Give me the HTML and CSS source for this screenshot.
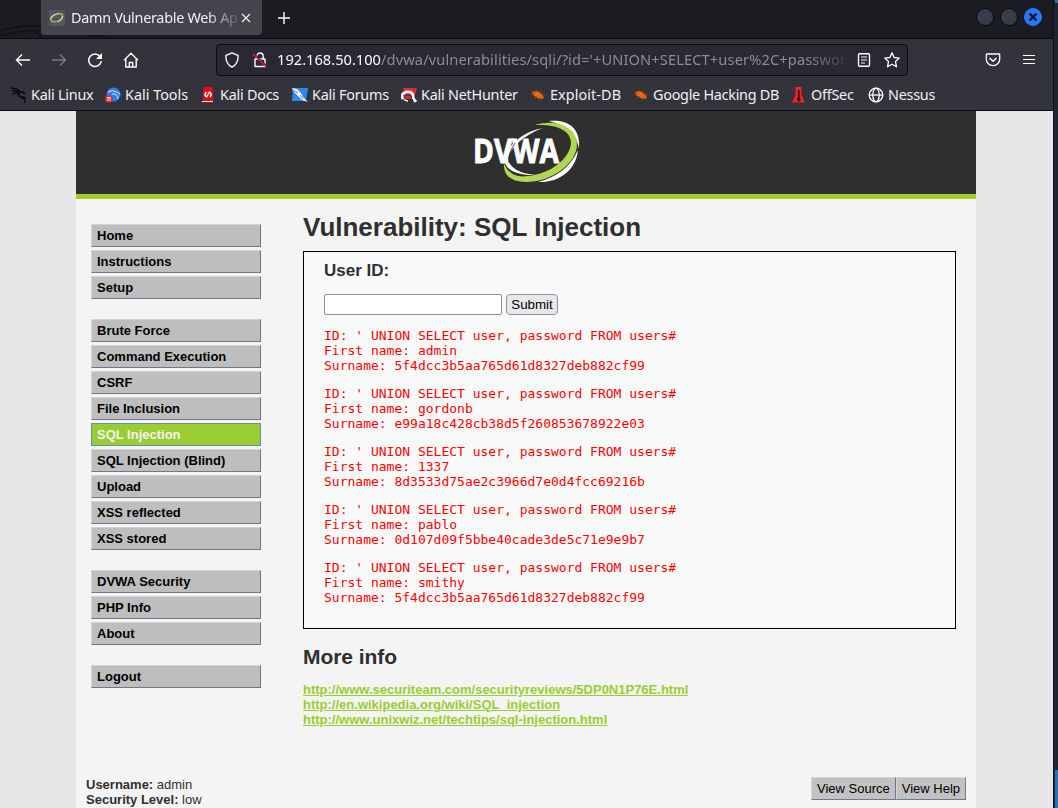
FILE: index.html
```html
<!DOCTYPE html>
<html lang="en">
<head>
<meta charset="utf-8">
<title>Damn Vulnerable Web App</title>
<link rel="stylesheet" href="styles.css">
</head>
<body>
<div class="desktop">
<div class="window">
  <header class="tabbar">
    <svg class="dragon" width="130" height="38" viewBox="0 0 130 38"><path d="M0 31Q20 24 44 26M0 36Q28 29 44 32M42 38l-8-8M88 36q15-1 30 4" fill="none" stroke="#101115" stroke-width="1.500"/></svg>
    <div class="tab">
      <svg class="favicon" width="16" height="16" viewBox="0 0 16 16"><rect width="16" height="16" rx="1" fill="#55565a"/><path d="M2 10C1 6 7 3.500 11 3.500" fill="none" stroke="#e3e5df" stroke-width="1.200"/><path d="M10 3.500c5 0 4 4 1 6.500-3 2-8 3-9 0" fill="none" stroke="#9dbd4b" stroke-width="1.400"/><path d="M14 6q0 4-5 6" fill="none" stroke="#d8dcd0" stroke-width="1"/></svg>
      <span class="tab-title">Damn Vulnerable Web Ap</span>
      <svg class="close" width="10" height="10" viewBox="0 0 10 10"><path d="M1 1l8 8M9 1L1 9" stroke="#eee" stroke-width="1.2"/></svg>
    </div>
    <svg class="plus" width="14" height="14" viewBox="0 0 14 14"><path d="M7 1v12M1 7h12" stroke="#fbfbfe" stroke-width="1.4"/></svg>
    <div class="controls">
      <i class="dot"></i><i class="dot"></i>
      <i class="dot dot-close"><svg width="10" height="10" viewBox="0 0 10 10"><path d="M1.500 1.500l7 7M8.500 1.500l-7 7" stroke="#101827" stroke-width="2.300"/></svg></i>
    </div>
  </header>

  <nav class="navbar">
    <svg class="nav-icon" width="16" height="16" viewBox="0 0 16 16"><path d="M15 8H1.5M7 2.5L1.5 8 7 13.500" fill="none" stroke="#fbfbfe" stroke-width="1.4"/></svg>
    <svg class="nav-icon" width="16" height="16" viewBox="0 0 16 16"><path d="M1 8h13.500M9 2.500L14.500 8 9 13.500" fill="none" stroke="#7b7c82" stroke-width="1.4"/></svg>
    <svg class="nav-icon" width="16" height="16" viewBox="0 0 16 16"><path d="M13.300 4.800A6.300 6.300 0 1 0 14.300 9" fill="none" stroke="#fbfbfe" stroke-width="1.5"/><path d="M15 1v6H9z" fill="#fbfbfe"/></svg>
    <svg class="nav-icon" width="16" height="16" viewBox="0 0 16 16"><path d="M1 8.300L8 1.200l7 7.100M2.800 7v8h10.400V7M6.300 15v-4.500h3.400V15" fill="none" stroke="#fbfbfe" stroke-width="1.4" stroke-linejoin="round"/></svg>
    <div class="urlbar">
      <svg width="16" height="16" viewBox="0 0 16 16"><path d="M8 .8l6 2.500c.5 5-1 9-6 11.900C3 12.300 1.500 8.300 2 3.300z" fill="none" stroke="#fbfbfe" stroke-width="1.4" stroke-linejoin="round"/></svg>
      <svg class="lock" width="16" height="16" viewBox="0 0 16 16"><path d="M4.800 7V4.200a3.200 3.200 0 0 1 6.400 0V7M3 7h10v7.500H3z" fill="none" stroke="#fbfbfe" stroke-width="1.4" stroke-linejoin="round"/><path d="M2 1.500l13 13" stroke="#282934" stroke-width="1.200"/><path d="M1 2l13.500 13" stroke="#e91340" stroke-width="1.500"/></svg>
      <span class="url"><b class="host">192.168.50.100</b>/dvwa/vulnerabilities/sqli/?id='+UNION+SELECT+user%2C+passwor</span>
      <svg class="reader" width="16" height="16" viewBox="0 0 16 16"><rect x="2.500" y="1.700" width="11" height="12.600" rx="1.300" fill="none" stroke="#fbfbfe" stroke-width="1.400"/><path d="M5 5h6M5 8h6M5 11h4" stroke="#fbfbfe" stroke-width="1.200"/></svg>
      <svg class="star" width="16" height="16" viewBox="0 0 16 16"><path d="M8 .8l2.100 4.700 5.200.6-3.800 3.500 1 5.200L8 12.200l-4.500 2.600 1-5.200L.7 6.100l5.200-.6z" fill="none" stroke="#fbfbfe" stroke-width="1.300" stroke-linejoin="round"/></svg>
    </div>
    <svg class="pocket" width="16" height="16" viewBox="0 0 16 16"><path d="M2 2h12q.7 0 .7.700v4.500a6.700 6.500 0 0 1-13.400 0V2.700q0-.7.7-.7z" fill="none" stroke="#fbfbfe" stroke-width="1.300"/><path d="M4.500 6L8 9.300 11.500 6" fill="none" stroke="#fbfbfe" stroke-width="1.500"/></svg>
    <svg class="burger" width="12" height="12" viewBox="0 0 12 12"><path d="M0 1.500h12M0 5.500h12M0 9.500h12" stroke="#fbfbfe" stroke-width="1.200"/></svg>
  </nav>

  <div class="bookmarks">
    <span class="bm"><svg width="16" height="16" viewBox="0 0 16 16"><path d="M0 1l6 1 4 3q3 0 4 2M1 4l6 0M2 7l5-2q-1 4 3 5 4 1 4 6M10 5q-2 1-2 3M11 10l4 1" fill="none" stroke="#09090b" stroke-width="1.300"/></svg>Kali Linux</span>
    <span class="bm wide"><svg width="16" height="16" viewBox="0 0 16 16"><circle cx="8.500" cy="7.500" r="7" fill="#2b7ff5"/><path d="M3 5q5-3 8 0 3 0 4 3M7 7q5-1 6 5" fill="none" stroke="#dceaff" stroke-width="1"/><circle cx="3.800" cy="11.800" r="3.800" fill="#e8292d"/><path d="M2 10.500h4M3 10.500v3.500M5 10.500v3.500" stroke="#fff" stroke-width=".8"/></svg>Kali Tools</span>
    <span class="bm"><svg width="16" height="16" viewBox="0 0 16 16"><path d="M1 0h12v15.500H1z" fill="#d80c12"/><path d="M1 0h2v14H1z" fill="#1e3262"/><path d="M2 14h11v1H2z" fill="#f4e8e8"/><path d="M6.500 5Q4 7 5.500 9T8 7.500 10.500 6t-.5 4" fill="none" stroke="#fff" stroke-width="1.300"/></svg>Kali Docs</span>
    <span class="bm"><svg width="16" height="16" viewBox="0 0 16 16"><path d="M1 1h15l-2 13H0z" fill="#2c87f4"/><path d="M0 1l5 1 4 4 2 4 5 5-6-2-4-4-5-5z" fill="#f3f5f7"/><path d="M1 3l5 3M8 8l3 4" stroke="#424650" stroke-width=".7"/></svg>Kali Forums</span>
    <span class="bm"><svg width="16" height="16" viewBox="0 0 16 16"><path d="M2 1h14l-3 11H4z" fill="#e32732"/><path d="M2 12q-3-5 3-7 8-1 7 6l3 4" fill="none" stroke="#fff" stroke-width="2.800"/><path d="M3 12q1 2 4 2" fill="none" stroke="#fff" stroke-width="1.500"/><path d="M4 9q3-3 6 0 0 3 2 4" fill="none" stroke="#25272b" stroke-width="1"/></svg>Kali NetHunter</span>
    <span class="bm exact"><svg width="16" height="16" viewBox="0 0 16 16"><path d="M2 5l5-1 5 3 2 4-4 1-6-3z" fill="#f2650c"/><path d="M1 3l3 3M6 2v4M10 3l1 5M16 7l-4 1M0 8l5-1M4 12l3-3M9 14l1-4M13 13l-2-3" stroke="#8f481f" stroke-width=".6"/></svg>Exploit-DB</span>
    <span class="bm tight"><svg width="16" height="16" viewBox="0 0 16 16"><path d="M2 5l5-1 5 3 2 4-4 1-6-3z" fill="#f2650c"/><path d="M1 3l3 3M6 2v4M10 3l1 5M16 7l-4 1M0 8l5-1M4 12l3-3M9 14l1-4M13 13l-2-3" stroke="#8f481f" stroke-width=".6"/></svg>Google Hacking DB</span>
    <span class="bm"><svg width="16" height="16" viewBox="0 0 16 16"><path d="M4.500 0h6v8l3.500 7.500H1L4.500 8z" fill="#e5252b"/><path d="M7 3h1.500v7l1.500 3H8.500v2H7v-2H5.500L7 10z" fill="#3b0507"/></svg>OffSec</span>
    <span class="bm tight"><svg width="16" height="16" viewBox="0 0 16 16"><g fill="none" stroke="#fbfbfe" stroke-width="1.300"><circle cx="8" cy="8" r="6.800"/><ellipse cx="8" cy="8" rx="3.200" ry="6.800"/><path d="M1 8h14"/></g></svg>Nessus</span>
  </div>

  <main class="viewport">
    <div class="container">
      <div class="banner">
        <svg width="110" height="66" viewBox="0 0 110 66">
          <path d="M75 1C94-1 107 8 105 29 103 15 94 6 75 1z" fill="#fff"/>
          <path d="M104 30C102 51 84 63 64 62c18-5 32-14 40-32z" fill="#fff"/>
          <path d="M69 8C47 16 29 34 36 44 41 51 50 54 62 55 42 56 31 49 31 41 32 25 50 11 69 8z" fill="#fff"/>
          <path d="M61 5C84-2 103 8 103 24 103 44 77 62 52 62 38 62 29 56 30 43 34 54 43 58 54 56 77 54 96 38 97 23 97 9 80 4 61 5z" fill="#afd750"/>
          <text class="logo-text" x="-1" y="43" textLength="86" lengthAdjust="spacingAndGlyphs">DVWA</text>
          <path d="M41 23q-8 12-6 20" fill="none" stroke="#2f2f2f" stroke-width=".8"/>
        </svg>
      </div>
      <div class="columns">
        <ul class="menu">
          <li>Home</li><li>Instructions</li><li>Setup</li>
          <li class="first">Brute Force</li><li>Command Execution</li><li>CSRF</li><li>File Inclusion</li><li class="selected">SQL Injection</li><li>SQL Injection (Blind)</li><li>Upload</li><li>XSS reflected</li><li>XSS stored</li>
          <li class="first">DVWA Security</li><li>PHP Info</li><li>About</li>
          <li class="first">Logout</li>
        </ul>
        <section class="content">
          <h1>Vulnerability: SQL Injection</h1>
          <div class="vulnerable">
            <h3>User ID:</h3>
            <form class="form"><input type="text" class="field"><button type="button" class="submit">Submit</button></form>
<pre>ID: ' UNION SELECT user, password FROM users#
First name: admin
Surname: 5f4dcc3b5aa765d61d8327deb882cf99</pre>
<pre>ID: ' UNION SELECT user, password FROM users#
First name: gordonb
Surname: e99a18c428cb38d5f260853678922e03</pre>
<pre>ID: ' UNION SELECT user, password FROM users#
First name: 1337
Surname: 8d3533d75ae2c3966d7e0d4fcc69216b</pre>
<pre>ID: ' UNION SELECT user, password FROM users#
First name: pablo
Surname: 0d107d09f5bbe40cade3de5c71e9e9b7</pre>
<pre>ID: ' UNION SELECT user, password FROM users#
First name: smithy
Surname: 5f4dcc3b5aa765d61d8327deb882cf99</pre>
          </div>
          <h2>More info</h2>
          <div class="links">
            <a>http://www.securiteam.com/securityreviews/5DP0N1P76E.html</a>
            <a>http://en.wikipedia.org/wiki/SQL_injection</a>
            <a>http://www.unixwiz.net/techtips/sql-injection.html</a>
          </div>
        </section>
      </div>
      <div class="status">
        <div><b>Username:</b> admin<br><b>Security Level:</b> low</div>
        <div class="actions"><span class="action">View Source</span><span class="action">View Help</span></div>
      </div>
    </div>
  </main>
</div>
<aside class="backdrop"><div class="backdrop-top"></div><div class="backdrop-bottom"></div></aside>
</div>
</body>
</html>
```
FILE: styles.css
```css
* { box-sizing: border-box; }
body { margin: 0; overflow: hidden; }
.desktop { display: flex; width: 1058px; height: 808px; background: #1c2531; }
.window { width: 1053px; height: 808px; display: flex; flex-direction: column; font-family: "Noto Sans", sans-serif; font-size: 14.67px; color: #f0f0f4; overflow: hidden; flex: none; }
svg { flex: none; display: block; }

.tabbar { height: 39px; flex: none; display: flex; align-items: flex-start; background: #1b1c21; border-bottom: 1px solid #0b0c0f; position: relative; }
.dragon { position: absolute; left: 0; top: 0; }
.tab { position: relative; width: 221px; height: 35px; margin-left: 41px; background: #43444c; border-radius: 0 0 4px 4px; display: flex; align-items: center; padding-left: 8px; }
.tab-title { margin-left: 6px; width: 168px; padding-bottom: 1px; white-space: nowrap; font-size: 14.4px; letter-spacing: -.28px; -webkit-mask-image: linear-gradient(to right, #000 135px, transparent 172px); mask-image: linear-gradient(to right, #000 135px, transparent 172px); }
.close { margin-left: 2px; }
.plus { margin: 11px 0 0 15px; }
.controls { margin: 8px 11px 0 auto; display: flex; gap: 6px; }
.dot { width: 18px; height: 18px; border-radius: 50%; background: #373c48; border: 1px solid #090a0d; }
.dot-close { background: #2777ff; border-color: #2777ff; display: grid; place-items: center; }

.navbar { height: 40px; flex: none; background: #33343b; display: flex; align-items: center; padding: 1px 0 0 15px; }
.nav-icon { margin-right: 20px; }
.urlbar { width: 692px; height: 32px; margin-left: 57px; background: #282934; border: 1px solid #0d0e12; border-radius: 4px; display: flex; align-items: center; padding-left: 7px; flex: none; }
.lock { margin-left: 12px; }
.url { margin-left: 9px; width: 570px; padding-bottom: 2px; color: #8b8c94; white-space: nowrap; letter-spacing: .1px; -webkit-mask-image: linear-gradient(to right, #000 530px, transparent 575px); mask-image: linear-gradient(to right, #000 530px, transparent 575px); }
.host { font-weight: normal; color: #fbfbfe; letter-spacing: 0; }
.reader { margin-left: 9px; }
.star { margin-left: 12px; }
.pocket { margin-left: 77px; }
.burger { margin-left: 22px; }

.bookmarks { height: 32px; flex: none; background: #33343b; border-bottom: 1px solid #0b0c0f; display: grid; grid-template-columns: 94px 95px 92px 109px 129px 103px 158px 77px 90px; padding: 0 0 0 11px; align-items: center; font-size: 14.4px; }
.bm { display: flex; align-items: center; gap: 4px; white-space: nowrap; letter-spacing: -.24px; }
.wide { letter-spacing: 0; }
.exact { letter-spacing: .08px; }
.tight { letter-spacing: -.27px; }

.viewport { flex: 1; background: #e7e7e7; font-family: "Liberation Sans", Arial, sans-serif; font-size: 13px; line-height: 15px; color: #2f2f2f; }
.container { width: 900px; height: 697px; margin-left: 76px; background: #f4f4f4; display: flex; flex-direction: column; }
.banner { height: 88px; flex: none; background: #2f2f2f; border-bottom: 5px solid #a1cc33; padding: 9px 0 0 398px; }
.banner svg { overflow: visible; }
.logo-text { font: bold 34px "Open Sans", "Noto Sans", sans-serif; fill: #fff; stroke: #fff; stroke-width: .9px; }
.columns { display: flex; height: 567px; flex: none; }
.menu { list-style: none; margin: 25px 42px 0 15px; padding: 0; width: 170px; }
.menu li { height: 23px; margin-bottom: 3px; background: #bebebe; border: 1px solid; border-color: #d4d4d4 #6e7991 #6e7991 #d4d4d4; padding: 3px 5px; font-weight: bold; color: #000; }
.menu .first { margin-top: 20px; }
.menu .selected { background: #9acd32; color: #f4f4f4; border-color: #708bb0; }
.content { width: 653px; }
h1 { font-size: 26px; line-height: 30px; margin: 13px 0 9px; }
.vulnerable { height: 378px; border: 1px solid #000; background: #f8fafa; padding: 9px 20px 0; }
h3 { font-size: 17px; line-height: 20px; margin: 0 0 13px; }
.form { display: flex; gap: 4px; margin: 0 0 13px; }
.field { width: 178px; height: 21px; border: 1px solid #8f8f9d; border-radius: 2px; background: #fff; padding: 0; }
.submit { width: 52px; height: 21px; border: 1px solid #8f8f9d; border-radius: 4px; background: #e9e9ed; color: #000; font: 13.33px "Liberation Sans", Arial, sans-serif; padding: 0; }
pre { margin: 0 0 13px; font: 13px/15px "DejaVu Sans Mono", monospace; color: #f00; }
h2 { font-size: 21px; line-height: 24px; margin: 16px 0 13px; letter-spacing: -.05px; }
.links { display: flex; flex-direction: column; align-items: flex-start; font-weight: bold; color: #9acd32; }
.links a { text-decoration: underline; }
.status { display: flex; justify-content: space-between; padding: 11px 10px 0; }
.actions { display: flex; }
.action { height: 23px; background: #c2c2c2; border: 1px solid; border-color: #d4d4d4 #6e7991 #6e7991 #d4d4d4; padding: 3px 5px; color: #000; white-space: nowrap; }
.backdrop { width: 5px; display: flex; flex-direction: column; background: #1c2531; border-left: 1px solid #0d1117; }
.backdrop-top { height: 3px; background: #2c6f9b; margin-left: 1px; }
.backdrop-bottom { margin: auto 0 0 1px; height: 38px; background: #2870b7; }
```
